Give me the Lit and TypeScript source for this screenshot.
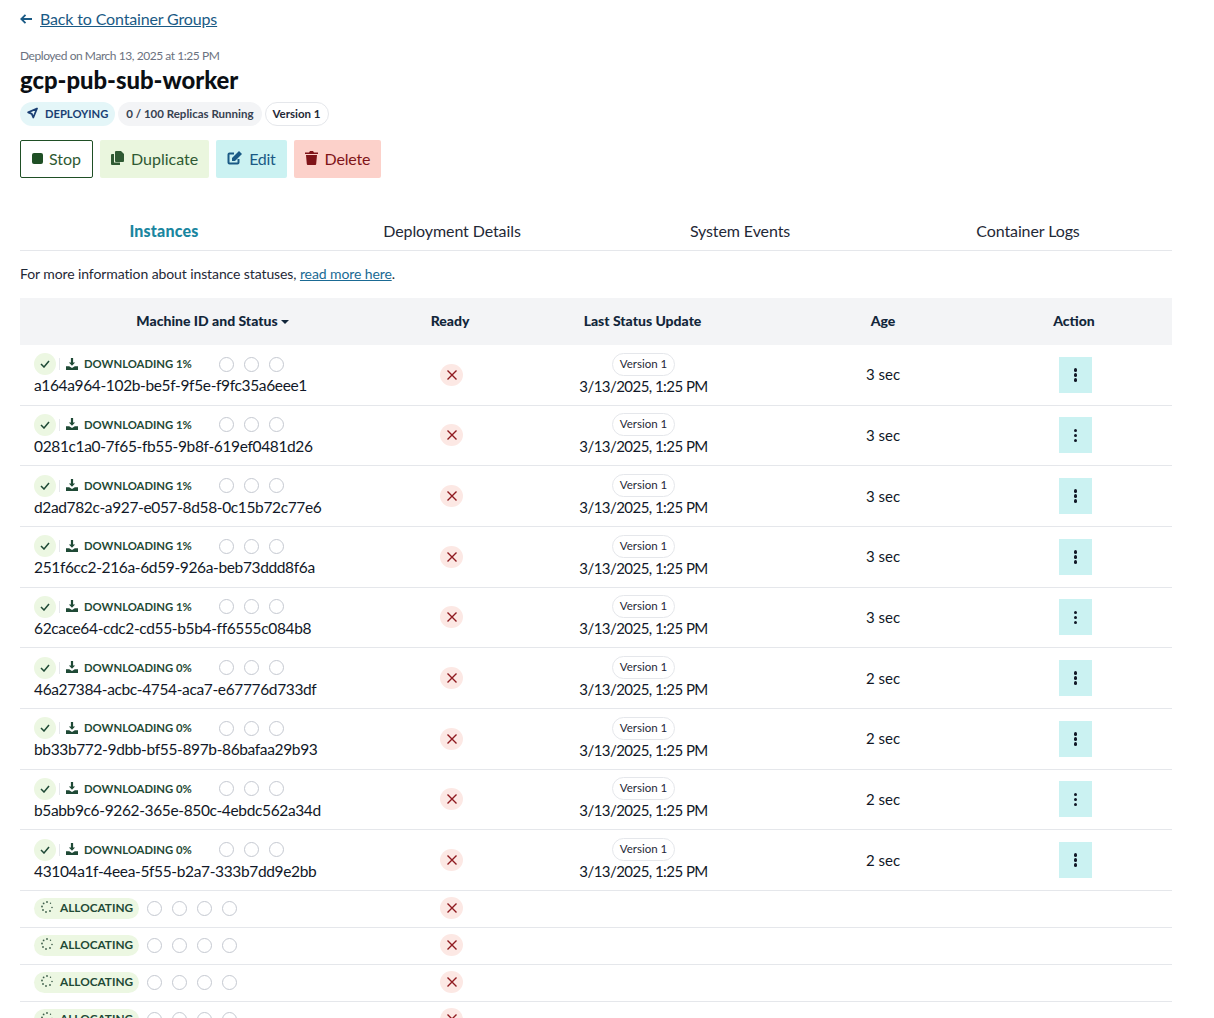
import { LitElement, html, css, svg } from 'lit'
import { customElement } from 'lit/decorators.js'

const machines = [
  ['a164a964-102b-be5f-9f5e-f9fc35a6eee1', '1%', '3 sec'],
  ['0281c1a0-7f65-fb55-9b8f-619ef0481d26', '1%', '3 sec'],
  ['d2ad782c-a927-e057-8d58-0c15b72c77e6', '1%', '3 sec'],
  ['251f6cc2-216a-6d59-926a-beb73ddd8f6a', '1%', '3 sec'],
  ['62cace64-cdc2-cd55-b5b4-ff6555c084b8', '1%', '3 sec'],
  ['46a27384-acbc-4754-aca7-e67776d733df', '0%', '2 sec'],
  ['bb33b772-9dbb-bf55-897b-86bafaa29b93', '0%', '2 sec'],
  ['b5abb9c6-9262-365e-850c-4ebdc562a34d', '0%', '2 sec'],
  ['43104a1f-4eea-5f55-b2a7-333b7dd9e2bb', '0%', '2 sec'],
]

const xIcon = svg`<svg width="10" height="10" viewBox="0 0 10 10"><path d="M.5.5l9 9M9.500.5l-9 9" stroke="#8f1a1f" stroke-width="1.4" fill="none"/></svg>`
const checkIcon = svg`<svg width="10" height="8" viewBox="0 0 10 8"><path d="M1 4l3 3 5-6" stroke="#1f4a36" stroke-width="1.5" fill="none"/></svg>`
const downloadIcon = svg`<svg width="12" height="12" viewBox="0 0 12 12"><path d="M4.900 0h2.200v4.400h2L6 7.800 2.900 4.400h2zM0 8.300h3.200L6 10l2.800-1.700H12V12H0z" fill="#1f4a36"/></svg>`
const spinnerIcon = svg`<svg width="12" height="12" viewBox="0 0 12 12" fill="#3f5f4b"><circle cx="6" cy="1" r=".9"/><circle cx="9.500" cy="2.300" r=".7"/><circle cx="11" cy="6.500" r=".8"/><circle cx="9" cy="10" r=".9"/><circle cx="5" cy="11" r=".9"/><circle cx="2" cy="9" r=".9"/><circle cx="1" cy="5.500" r=".9"/><circle cx="2.600" cy="2.400" r=".9"/></svg>`

@customElement('app-root')
export class AppRoot extends LitElement {
  static styles = css`
    :host {
      display: block;
      height: 1018px;
      overflow: hidden;
      box-sizing: border-box;
      padding: 0 42px 0 20px;
      font-family: 'Lato', sans-serif;
      color: #111827;
      background: white;
    }

    a {
      color: #1a5a85;
    }

    .back {
      display: flex;
      align-items: center;
      gap: 8px;
      height: 36px;
      font-size: 16px;
      letter-spacing: -0.15px;
    }

    .back svg {
      margin-top: 2px;
    }

    .deployed {
      margin-top: 12px;
      height: 15px;
      line-height: 15px;
      font-size: 12px;
      letter-spacing: -0.45px;
      color: #6b7280;
    }

    h1 {
      margin: 3px 0 0;
      height: 28px;
      line-height: 28px;
      font-size: 23.8px;
      font-weight: 900;
      color: #0b0f14;
    }

    .chips {
      display: flex;
      gap: 3px;
      margin-top: 8px;
    }

    .chip {
      display: flex;
      align-items: center;
      gap: 7px;
      height: 24px;
      box-sizing: border-box;
      padding: 0 8px 2px;
      border-radius: 12px;
      font-size: 11.5px;
      font-weight: 700;
      white-space: nowrap;
    }

    .chip.deploying {
      padding: 0 7px 2px;
      font-size: 11.2px;
      background: #e4f6f8;
      color: #1a3f73;
    }

    .chip.replicas {
      background: #f3f4f6;
      color: #374151;
    }

    .chip.version {
      border: 1px solid #e5e7eb;
      padding: 0 7px 2px;
      color: #1f2937;
    }

    .buttons {
      display: flex;
      gap: 7px;
      margin-top: 14px;
    }

    .btn {
      display: flex;
      align-items: center;
      gap: 7px;
      height: 38px;
      box-sizing: border-box;
      padding: 0 11px 2px;
      border-radius: 2px;
      font-size: 16px;
    }

    .btn.stop {
      gap: 6px;
      border: 1px solid #1f4f25;
      color: #2f5a33;
    }

    .btn.duplicate {
      background: #eaf6de;
      color: #2f5a33;
    }

    .btn.edit {
      letter-spacing: -0.3px;
      background: #cbf2f2;
      color: #1a5a85;
    }

    .btn.delete {
      letter-spacing: -0.15px;
      background: #fcd1ca;
      color: #7f1418;
    }

    .tabs {
      display: grid;
      grid-template-columns: repeat(4, 1fr);
      margin-top: 35px;
      height: 37px;
      border-bottom: 1px solid #e5e7eb;
    }

    .tab {
      text-align: center;
      line-height: 35px;
      font-size: 16px;
      letter-spacing: -0.1px;
      color: #1f2937;
    }

    .tab.active {
      color: #1a86a0;
      font-weight: 900;
      letter-spacing: 0.2px;
    }

    .info {
      margin-top: 14px;
      height: 17px;
      line-height: 17px;
      font-size: 14px;
      letter-spacing: -0.1px;
      color: #1f2937;
    }

    .info a {
      color: #1a6a94;
    }

    .row {
      display: grid;
      grid-template-columns: 385px 90px 295px 186px 196px;
      align-items: center;
      justify-items: center;
      box-sizing: border-box;
      height: 60.67px;
      border-bottom: 1px solid #e5e7eb;
    }

    .row.head {
      height: 47px;
      margin-top: 16px;
      padding-bottom: 2px;
      border: none;
      background: #f3f4f6;
      font-size: 14px;
      font-weight: 900;
      color: #12263a;
    }

    .row.alloc {
      height: 37px;
    }

    .row.alloc .no {
      margin-bottom: 1px;
    }

    .caret {
      display: inline-block;
      margin-left: 3px;
      vertical-align: 2px;
      border: 4.5px solid transparent;
      border-top-color: #12263a;
      border-bottom: none;
    }

    .machine {
      justify-self: start;
      padding: 0 0 1px 14px;
    }

    .status {
      display: flex;
      align-items: center;
      height: 22px;
    }

    .check {
      display: flex;
      align-items: center;
      justify-content: center;
      width: 22px;
      height: 22px;
      border-radius: 50%;
      background: #ecf7e2;
    }

    .sep {
      width: 1px;
      height: 12px;
      margin: 0 6px 0 3px;
      background: #e5e7eb;
    }

    .state {
      display: flex;
      align-items: center;
      gap: 6px;
      width: 153px;
      padding-bottom: 1px;
      font-size: 11.3px;
      font-weight: 700;
      color: #1f4a36;
    }

    .state-pill {
      display: flex;
      align-items: center;
      gap: 7px;
      height: 21px;
      box-sizing: border-box;
      width: 105px;
      padding: 0 0 2px 7px;
      margin-right: 7.5px;
      border-radius: 11px;
      background: #ecf7e2;
      font-size: 11.8px;
      font-weight: 700;
      color: #1f4a36;
    }

    .dots {
      display: flex;
      gap: 10.2px;
    }

    .dot {
      box-sizing: border-box;
      width: 15px;
      height: 15px;
      border: 1px solid #c5c9d1;
      border-radius: 50%;
    }

    .id {
      height: 20px;
      line-height: 20px;
      font-size: 15.5px;
      letter-spacing: -0.36px;
      white-space: nowrap;
    }

    .no {
      display: flex;
      align-items: center;
      justify-content: center;
      width: 23px;
      height: 22px;
      margin-left: 3px;
      border-radius: 50%;
      background: #fce8e4;
    }

    .update {
      display: flex;
      flex-direction: column;
      align-items: center;
      gap: 1px;
      padding: 0 0 2px 2px;
      font-size: 15px;
      letter-spacing: -0.55px;
    }

    .chip.small {
      height: 23px;
      font-weight: 400;
      letter-spacing: 0;
    }

    .age {
      padding-bottom: 1px;
      font-size: 15px;
    }

    .more {
      display: flex;
      flex-direction: column;
      align-items: center;
      justify-content: center;
      gap: 1.5px;
      width: 33px;
      height: 36px;
      margin-left: 3px;
      background: #cbf2f2;
    }

    .more i {
      width: 3.5px;
      height: 3.5px;
      border-radius: 50%;
      background: #111827;
    }
  `

  renderDots(n: number) {
    return html`<div class="dots">${Array.from({ length: n }, () => html`<div class="dot"></div>`)}</div>`
  }

  render() {
    return html`
      <div class="back">
        <svg width="12" height="10" viewBox="0 0 12 10"><path d="M5.500.8L1.300 5l4.200 4.200M1.300 5H12" stroke="#1a5a85" stroke-width="1.800" fill="none"/></svg>
        <a href="#">Back to Container Groups</a>
      </div>
      <div class="deployed">Deployed on March 13, 2025 at 1:25 PM</div>
      <h1>gcp-pub-sub-worker</h1>
      <div class="chips">
        <div class="chip deploying">
          <svg width="11" height="12" viewBox="0 0 11 12"><path d="M10 1.500L1.200 5.300 4.800 6.800 6.300 10.500z" stroke="#1a3f73" stroke-width="1.800" stroke-linejoin="round" fill="none"/></svg>
          DEPLOYING
        </div>
        <div class="chip replicas">0 / 100 Replicas Running</div>
        <div class="chip version">Version 1</div>
      </div>
      <div class="buttons">
        <div class="btn stop">
          <svg width="11" height="11" viewBox="0 0 11 11"><rect width="11" height="11" rx="2" fill="#1f4f25"/></svg>
          Stop
        </div>
        <div class="btn duplicate">
          <svg width="13" height="14" viewBox="0 0 13 14" fill="#2f5a33"><path d="M5 0h5l3 3v7a1 1 0 0 1-1 1H5a1 1 0 0 1-1-1V1a1 1 0 0 1 1-1z"/><path d="M3 3v8.500h6V14H1a1 1 0 0 1-1-1V4a1 1 0 0 1 1-1z"/></svg>
          Duplicate
        </div>
        <div class="btn edit">
          <svg width="15" height="14" viewBox="0 0 15 14"><path d="M7 2.500H2.500a1 1 0 0 0-1 1v8a1 1 0 0 0 1 1h8a1 1 0 0 0 1-1V8" stroke="#1a5a85" stroke-width="2" fill="none"/><path d="M12 0l3 3-7 7H5V7z" fill="#1a5a85"/></svg>
          Edit
        </div>
        <div class="btn delete">
          <svg width="13" height="14" viewBox="0 0 13 14" fill="#7f1418"><path d="M0 1.500h4L5 0h3l1 1.500h4V3H0z"/><path d="M1 4h11l-.8 9a1 1 0 0 1-1 1H2.800a1 1 0 0 1-1-1z"/></svg>
          Delete
        </div>
      </div>
      <div class="tabs">
        <div class="tab active">Instances</div>
        <div class="tab">Deployment Details</div>
        <div class="tab">System Events</div>
        <div class="tab">Container Logs</div>
      </div>
      <div class="info">For more information about instance statuses, <a href="#">read more here</a>.</div>
      <div class="row head">
        <div>Machine ID and Status<span class="caret"></span></div>
        <div>Ready</div>
        <div>Last Status Update</div>
        <div>Age</div>
        <div>Action</div>
      </div>
      ${machines.map(
        ([id, pct, age]) => html`
          <div class="row">
            <div class="machine">
              <div class="status">
                <div class="check">${checkIcon}</div>
                <div class="sep"></div>
                <div class="state">${downloadIcon} DOWNLOADING ${pct}</div>
                ${this.renderDots(3)}
              </div>
              <div class="id">${id}</div>
            </div>
            <div class="no">${xIcon}</div>
            <div class="update">
              <div class="chip version small">Version 1</div>
              <div>3/13/2025, 1:25 PM</div>
            </div>
            <div class="age">${age}</div>
            <div class="more"><i></i><i></i><i></i></div>
          </div>
        `,
      )}
      ${[0, 1, 2, 3].map(
        () => html`
          <div class="row alloc">
            <div class="machine status">
              <div class="state-pill">${spinnerIcon} ALLOCATING</div>
              ${this.renderDots(4)}
            </div>
            <div class="no">${xIcon}</div>
          </div>
        `,
      )}
    `
  }
}
